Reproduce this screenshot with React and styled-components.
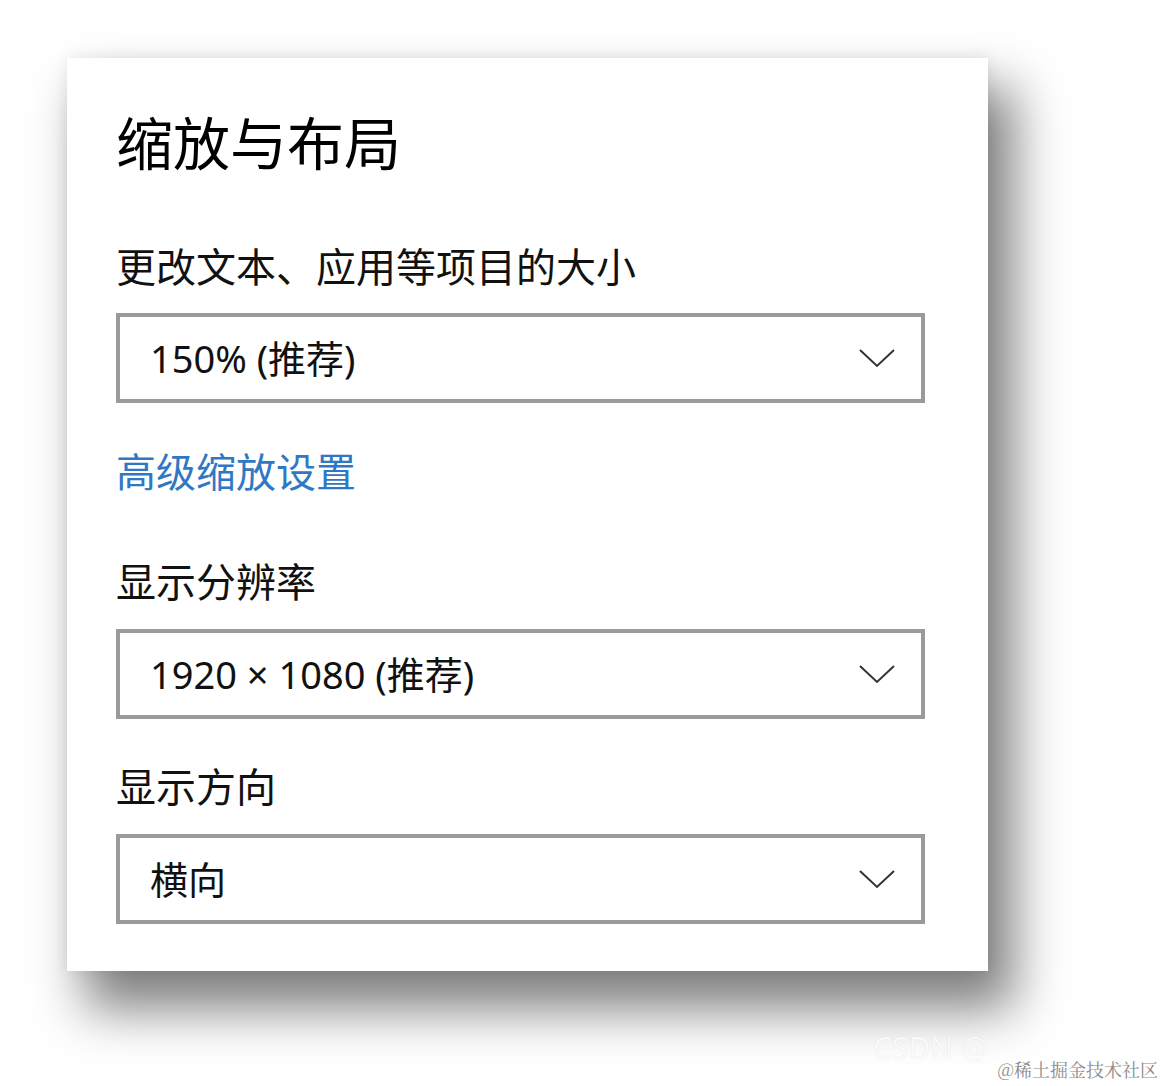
import React from 'react';
import styled, { createGlobalStyle } from 'styled-components';

const GlobalStyle = createGlobalStyle`
    html, body {
        margin: 0;
        padding: 0;
        background: #ffffff;
    }
    body {
        width: 1166px;
        height: 1086px;
        overflow: hidden;
        font-family: "Noto Sans", "Noto Sans CJK SC", sans-serif;
        color: #000;
    }
`;

const Page = styled.div`
    position: relative;
    width: 1166px;
    height: 1086px;
    padding: 58px 0 0 67px;
    box-sizing: border-box;
`;

const Card = styled.section`
    width: 921px;
    height: 913px;
    box-sizing: border-box;
    padding: 48px 63px 0 49px;
    background: #fff;
    box-shadow: 22px 34px 48px 4px rgba(0, 0, 0, 0.5), 0 0 14px rgba(0, 0, 0, 0.08);
    display: flex;
    flex-direction: column;
`;

const Title = styled.h1`
    margin: 0;
    font-size: 57px;
    line-height: 68px;
    font-weight: 400;
    font-family: "Noto Sans CJK SC", sans-serif;
    letter-spacing: 0;
`;

const Label = styled.div`
    margin-top: ${(p) => p.$top}px;
    font-size: 40px;
    line-height: 48px;
    font-family: "Noto Sans CJK SC", sans-serif;
    color: #111;
`;

const Link = styled.a`
    display: block;
    margin-top: ${(p) => p.$top}px;
    font-size: 40px;
    line-height: 48px;
    font-family: "Noto Sans CJK SC", sans-serif;
    color: #2f78c4;
    text-decoration: none;
`;

const Select = styled.div`
    margin-top: ${(p) => p.$top}px;
    height: 90px;
    box-sizing: border-box;
    border: 4px solid #9a9a9a;
    display: flex;
    align-items: center;
    justify-content: space-between;
    padding: 0 26px 0 30px;
`;

const Value = styled.span`
    font-size: 38px;
    line-height: 48px;
    color: #111;
    font-family: "Noto Sans", "Noto Sans CJK SC", sans-serif;
`;

const Chevron = () => (
    <svg width="36" height="20" viewBox="0 0 36 20">
        <path d="M1 2 L18 18 L35 2" fill="none" stroke="#333" strokeWidth="2" />
    </svg>
);

const Watermark = styled.div`
    position: absolute;
    right: 8px;
    bottom: 6px;
    font-size: 18px;
    line-height: 22px;
    color: #8a8a8a;
    font-family: "Noto Serif CJK SC", "Noto Sans CJK SC", serif;
`;

const Faint = styled.div`
    position: absolute;
    left: 873px;
    bottom: 18px;
    font-size: 30px;
    color: rgba(255, 255, 255, 0.85);
    font-family: "Noto Sans", sans-serif;
    text-shadow: 0 0 1px rgba(0, 0, 0, 0.12);
`;

const DropDown = ({ top, children }) => (
    <Select $top={top}>
        <Value>{children}</Value>
        <Chevron />
    </Select>
);

export default function App() {
    return (
        <Page>
            <GlobalStyle />
            <Card>
                <Title>缩放与布局</Title>
                <Label $top={67}>更改文本、应用等项目的大小</Label>
                <DropDown top={24}>150% (推荐)</DropDown>
                <Link $top={43}>高级缩放设置</Link>
                <Label $top={62}>显示分辨率</Label>
                <DropDown top={25}>1920 × 1080 (推荐)</DropDown>
                <Label $top={42}>显示方向</Label>
                <DropDown top={25}>横向</DropDown>
            </Card>
            <Faint>CSDN @</Faint>
            <Watermark>@稀土掘金技术社区</Watermark>
        </Page>
    );
}
